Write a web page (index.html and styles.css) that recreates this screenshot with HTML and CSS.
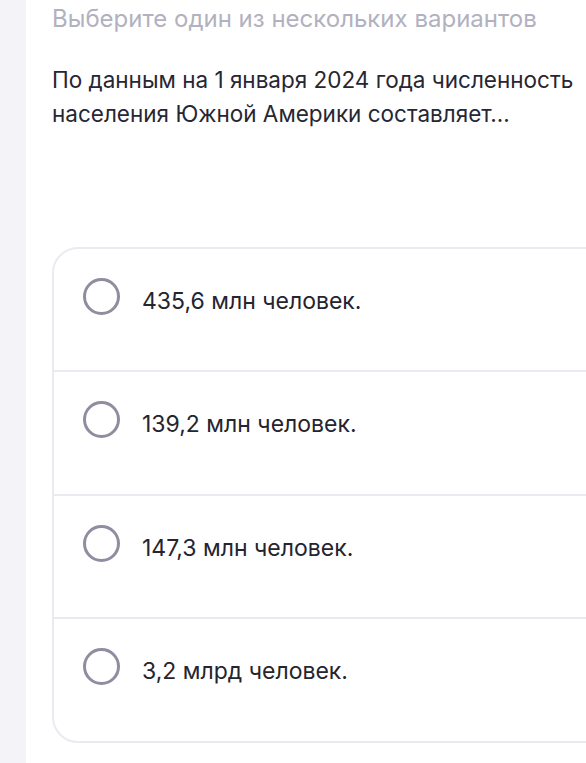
FILE: index.html
```html
<!DOCTYPE html>
<html lang="ru">
<head>
    <meta charset="UTF-8">
    <meta name="viewport" content="width=device-width, initial-scale=1.0">
    <title>Тест</title>
    <link rel="stylesheet" href="styles.css">
</head>
<body>
    <div class="page">
        <div class="side-strip"></div>
        <div class="quiz">
            <p class="hint">Выберите один из нескольких вариантов</p>
            <p class="question">По данным на 1 января 2024 года численность населения Южной Америки составляет...</p>

            <div class="answers">
                <label class="answer">
                    <span class="radio"></span>
                    <span class="answer-text">435,6 млн человек.</span>
                </label>
                <label class="answer">
                    <span class="radio"></span>
                    <span class="answer-text">139,2 млн человек.</span>
                </label>
                <label class="answer">
                    <span class="radio"></span>
                    <span class="answer-text">147,3 млн человек.</span>
                </label>
                <label class="answer">
                    <span class="radio"></span>
                    <span class="answer-text">3,2 млрд человек.</span>
                </label>
            </div>
        </div>
    </div>
</body>
</html>
```

FILE: styles.css
```css
body{
    margin: 0;
    font-family: Inter, "Noto Sans", sans-serif;
    background-color: #fff;
}

.page{
    display: flex;
    min-height: 763px;
    overflow: hidden;
}

.side-strip{
    width: 26px;
    flex-shrink: 0;
    background-color: #f3f3f8;
}

.quiz{
    flex: 1;
    padding-left: 26px;
    min-width: 0;
}

.hint{
    margin: 4px 0 0;
    font-size: 24px;
    line-height: 30px;
    color: #b2b1bf;
}

.question{
    margin: 29px 0 0;
    font-size: 22.5px;
    line-height: 34px;
    color: #272633;
    width: 545px;
}

/* ----------------------------- ANSWERS ----------------------------- */
.answers{
    margin-top: 116px;
    margin-right: -40px;
    border: 2px solid #ebeaf1;
    border-radius: 26px;
}

.answer{
    display: flex;
    align-items: flex-start;
    height: 123.5px;
    box-sizing: border-box;
    padding: 29px 0 0 29px;
    border-top: 2px solid #ebeaf1;
    cursor: pointer;
}
.answer:first-child{
    border-top: none;
    height: 121px;
    padding-top: 29px;
}

.radio{
    width: 37px;
    height: 37px;
    box-sizing: border-box;
    border: 3.5px solid #8f8ea0;
    border-radius: 50%;
    flex-shrink: 0;
}

.answer-text{
    margin-left: 22px;
    font-size: 23px;
    line-height: 37px;
    color: #25242f;
    padding-top: 5px;
}
```
